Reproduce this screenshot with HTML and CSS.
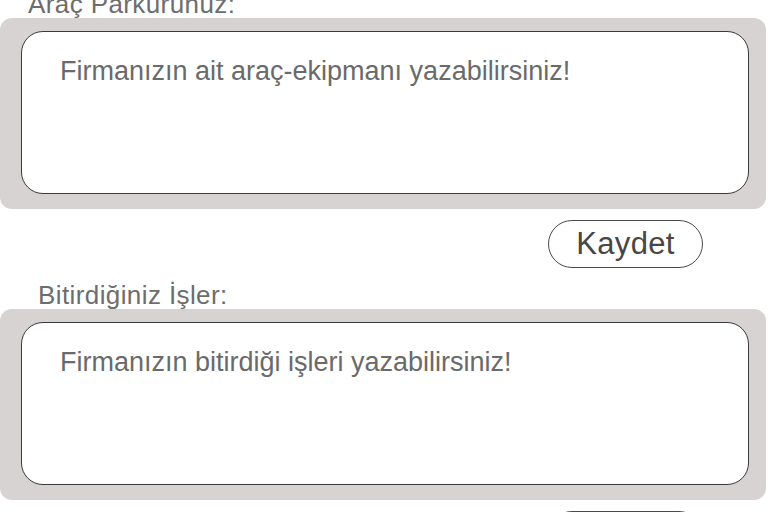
FILE: index.html
```html
<!DOCTYPE html>
<html lang="tr">
<head>
<meta charset="utf-8">
<title>Firma</title>
<link rel="stylesheet" href="styles.css">
</head>
<body>
<main class="page">
  <section class="section">
    <label class="label label-first" for="arac">Araç Parkurunuz:</label>
    <div class="panel">
      <textarea id="arac" class="field" placeholder="Firmanızın ait araç-ekipmanı yazabilirsiniz!"></textarea>
    </div>
    <div class="actions"><button class="btn" type="button">Kaydet</button></div>
  </section>
  <section class="section">
    <label class="label label-second" for="isler">Bitirdiğiniz İşler:</label>
    <div class="panel">
      <textarea id="isler" class="field" placeholder="Firmanızın bitirdiği işleri yazabilirsiniz!"></textarea>
    </div>
    <div class="actions"><button class="btn" type="button">Kaydet</button></div>
  </section>
</main>
</body>
</html>
```

FILE: styles.css
```css
html, body {
  margin: 0;
  padding: 0;
  background: #ffffff;
  overflow: hidden;
}
body {
  font-family: "Liberation Sans", Arial, sans-serif;
  color: #6b6b6b;
}
.page {
  width: 768px;
  margin-top: -9px;
}
.section {
  display: flex;
  flex-direction: column;
}
.label {
  display: block;
  font-size: 26px;
  line-height: 27px;
  letter-spacing: 0.4px;
  color: #6d6d6d;
}
.label-first {
  padding-left: 28px;
}
.label-second {
  padding-left: 38px;
}
.panel {
  width: 766px;
  box-sizing: border-box;
  background: #d6d3d2;
  border-radius: 12px;
  padding: 13px 17px 15px 21px;
}
.field {
  display: block;
  width: 100%;
  height: 163px;
  box-sizing: border-box;
  margin: 0;
  resize: none;
  background: #ffffff;
  border: 1px solid #3a3a3a;
  border-radius: 22px;
  padding: 24px 20px 10px 38px;
  font-family: "Liberation Sans", Arial, sans-serif;
  font-size: 27px;
  line-height: 30px;
  color: #555;
  outline: none;
}
.field::placeholder {
  color: #6a6a6a;
  opacity: 1;
}
.actions {
  display: flex;
  justify-content: flex-end;
  padding: 11px 65px 14px 0;
}
.btn {
  width: 155px;
  height: 48px;
  box-sizing: border-box;
  border: 1px solid #4a4a4a;
  border-radius: 24px;
  background: #ffffff;
  font-family: "Liberation Sans", Arial, sans-serif;
  font-size: 31px;
  letter-spacing: 0.3px;
  line-height: 1;
  color: #474747;
  padding: 0 0 2px;
  cursor: pointer;
}
```
